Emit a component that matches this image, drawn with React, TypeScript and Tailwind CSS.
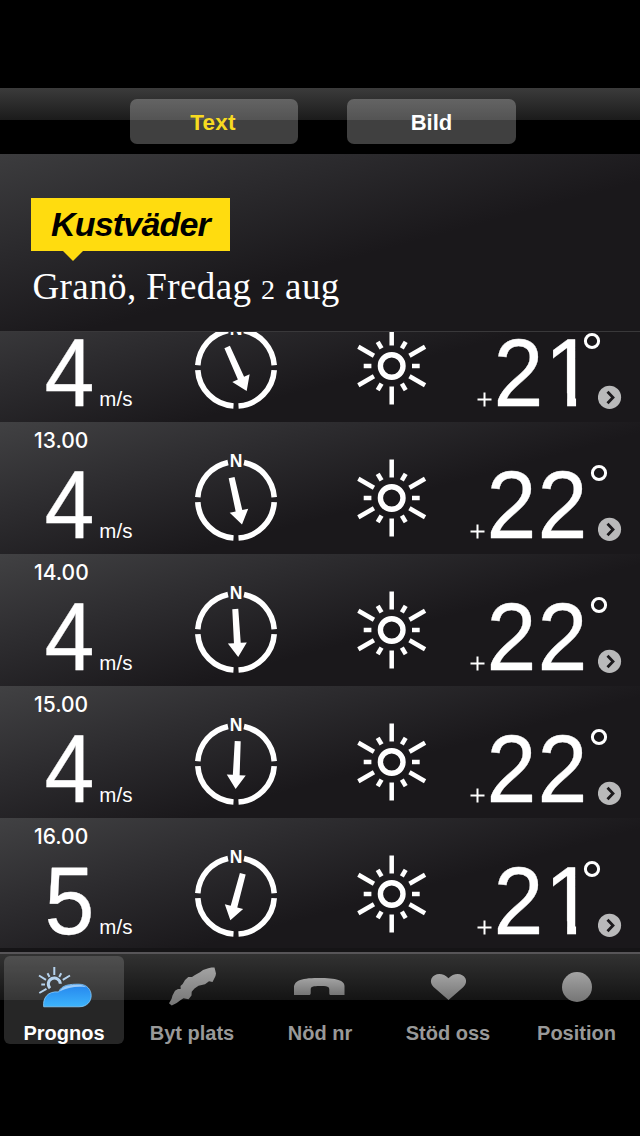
import React from 'react';

type Hour = { time: string; wind: string; angle: number; temp: string };

const hours: Hour[] = [
  { time: '', wind: '4', angle: -24, temp: '21' },
  { time: '13.00', wind: '4', angle: -12.5, temp: '22' },
  { time: '14.00', wind: '4', angle: -3.5, temp: '22' },
  { time: '15.00', wind: '4', angle: 2.5, temp: '22' },
  { time: '16.00', wind: '5', angle: 15, temp: '21' },
];

function Compass({ angle }: { angle: number }) {
  return (
    <svg width="90" height="100" viewBox="-45 -50 90 100" className="block" fill="none">
      <g stroke="#fff" strokeWidth="5.6">
        <path d="M-38.2 -2.8A38.2 38.2 0 0 1 -8 -37.6" />
        <path d="M8 -37.6A38.2 38.2 0 0 1 38.2 -2.8" />
        <path d="M38.2 2.2A38.2 38.2 0 0 1 2.5 38" />
        <path d="M-2.5 38A38.2 38.2 0 0 1 -38.2 2.2" />
      </g>
      <text x="0" y="-32.8" textAnchor="middle" fill="#fff" fontSize="17.5" fontWeight="700" fontFamily="Liberation Sans, Arial, sans-serif">N</text>
      <path transform={`translate(.7 .5) rotate(${angle})`} d="M-3 -23.5H3L3.4 10.5H9.5L0 24.5L-9.5 10.5H-3.4Z" fill="#fff" />
    </svg>
  );
}

function Sun() {
  return (
    <svg width="80" height="80" viewBox="-39.7 -40 80 80" className="block" fill="none" stroke="#fff">
      <circle r="11.3" strokeWidth="5.4" />
      {[0, 60, 120, 180, 240, 300].map((a) => (
        <path key={a} transform={`rotate(${a})`} d="M0 -20.5V-38.5" strokeWidth="4.5" />
      ))}
      {[30, 90, 150, 210, 270, 330].map((a) => (
        <path key={a} transform={`rotate(${a})`} d="M0 -20.3V-28" strokeWidth="4.5" />
      ))}
    </svg>
  );
}

function Digits({ value }: { value: string }) {
  return (
    <span className="flex text-[95.5px] leading-[95px] tracking-[-2px] [-webkit-text-stroke:0.3px_#fff]">
      {value.split('').map((d, i) =>
        d === '1' ? (
          <span key={i} className="block scale-x-94 [clip-path:polygon(0_0,100%_0,100%_70%,65.6%_70%,65.6%_100%,47%_100%,47%_70%,0_70%)]">1</span>
        ) : (
          <span key={i} className="block scale-x-94">{d}</span>
        ),
      )}
    </span>
  );
}

function Row({ h }: { h: Hour }) {
  const wide = h.temp === '22';
  return (
    <div className="flex h-[132px] w-full shrink-0 bg-[linear-gradient(165deg,#414143_0%,#2d2c2f_30%,#1a181b_60%)]">
      <div className="flex w-[191px] flex-col pl-[34px]">
        <span className="mt-[6px] block h-[26px] font-[Inter] text-[21px] leading-[26px] font-medium">{h.time}</span>
        <div className="mt-[4px] flex items-baseline pl-[9px]">
          <Digits value={h.wind} />
          <span className="ml-[5px] text-[20.5px] tracking-[0.2px]">m/s</span>
        </div>
      </div>
      <div className="w-[161px] pt-[28px]"><Compass angle={h.angle} /></div>
      <div className="w-[80px] pt-[36px]"><Sun /></div>
      <div className="flex flex-1 justify-end pt-[36px] pr-[18px]">
        <svg width="15" height="15" className="mt-[66px] -mr-[1px] -ml-[1px] -translate-x-[1px]" stroke="#fff" strokeWidth="2"><path d="M7.5 .5V14.5M.5 7.5H14.5" /></svg>
        <Digits value={h.temp} />
        <div className={wide ? 'flex w-[35px] flex-col' : 'flex w-[28px] flex-col'}>
          <svg width="18" height="18" className={wide ? 'mt-[6px] ml-[3px]' : 'mt-[6px] -ml-[11px]'} fill="none" stroke="#fff" strokeWidth="3"><circle cx="9" cy="9" r="6.6" /></svg>
          <svg width="24" height="24" className={wide ? 'mt-[35px] ml-[11px]' : 'mt-[35px] ml-[4px]'} fill="none"><circle cx="11.5" cy="12.3" r="11.6" fill="#b9b9ba" /><path d="M9.5 6.800L15 12.500L9.500 18.300" stroke="#1b191c" strokeWidth="2.8" /></svg>
        </div>
      </div>
    </div>
  );
}

function Gradient() {
  return (
    <defs>
      <linearGradient id="grey" x1="0" y1="0" x2="0" y2="1"><stop offset="0" stopColor="#a3a3a3" /><stop offset="1" stopColor="#757575" /></linearGradient>
      <linearGradient id="sky" x1="0" y1="0" x2="0" y2="1"><stop offset="0" stopColor="#2585ee" /><stop offset="1" stopColor="#3db4fb" /></linearGradient>
    </defs>
  );
}

const icons = [
  <svg key="w" width="60" height="50" viewBox="34 962 60 50" fill="none">
    <Gradient />
    <g stroke="#b6d3ee" strokeWidth="2">
      <path d="M54.3 967V975M39 975.500L46 979.800M70 975.500L62.800 979.800M39.300 993L46.500 988.800M47.500 973.200L49.500 977M61.200 973.200L59.200 977M41.300 984.500H45" />
      <path d="M50 988.200A6 6 0 1 1 60.300 983.800" strokeWidth="3" />
    </g>
    <path d="M43.700 1006.800C42.500 998 48 990.800 58.500 992C62 984.500 70 984.200 79 984.200C95 984.200 95.500 1006.800 79 1006.800Z" fill="url(#sky)" stroke="#8accfa" strokeWidth=".8" />
    <path d="M59.500 991.500C63 985 70 984.800 79 984.800C82 984.800 84.500 986 86 987.200C77 986 67 987.500 59.500 991.500Z" fill="#9ccbf8" />
  </svg>,
  <svg key="s" width="60" height="50" viewBox="162 962 60 50"><path fill="url(#grey)" d="M214.500 967.500L216 973.500L215.500 976L212.500 982L209 981.300L205 984.300L198.500 985.700L194.500 988.500L191.700 991.700L191.500 995.500L188.500 999.300L183.500 998.300L180 1000.500L176.700 1003L171.700 1005.500L169 1003.300L171.500 999L172.500 995.500L175 990.700L178 989L180.700 989L180.500 986L182.700 984L185 980L188.300 977L192 977L195 975L200 972.300L203 970L208.300 968.300L211.500 967.500Z" /></svg>,
  <svg key="p" width="60" height="50" viewBox="290 962 60 50"><path fill="url(#grey)" d="M294 995V988C294 981.500 299 978 318 978C337 978 344.500 980.500 344.500 986V995H331C329.500 995 329.300 994.500 329.300 993V989.500C329.300 986.500 327 986 320 986C313 986 310.700 986.500 310.700 989.500V993C310.700 994.500 310 995 309 995Z" /></svg>,
  <svg key="h" width="60" height="50" viewBox="418 962 60 50"><path fill="url(#grey)" d="M448.500 1000L435 988.300C431 984.800 430.200 981.500 431.500 978.500C434.500 972.500 443.500 972.500 448.500 978.300C453.500 972.500 462.500 972.500 465.500 978.500C466.800 981.500 466 984.800 462 988.300Z" /></svg>,
  <svg key="c" width="60" height="50" viewBox="546 962 60 50"><circle cx="577" cy="987" r="15" fill="url(#grey)" /></svg>,
];
const labels = ['Prognos', 'Byt plats', 'Nöd nr', 'Stöd oss', 'Position'];

export default function App() {
  return (
    <div className="flex h-[1136px] w-[640px] flex-col overflow-hidden bg-black pt-[88px] font-['Liberation_Sans',Arial,sans-serif] text-white">
      <div className="flex h-[66px] shrink-0 gap-[49px] bg-[linear-gradient(#3b3b3b_0px,#1b1b1b_32px,#000_32px)] pt-[11px] pl-[130px] text-[22px] font-bold">
        <div className="flex h-[45px] w-[168px] items-center justify-center rounded-[7px] bg-white/25 pt-[3px] pr-[2px] text-[22.5px] tracking-[0.2px] text-[#f7da20]">Text</div>
        <div className="flex h-[45px] w-[169px] items-center justify-center rounded-[7px] bg-white/25 pt-[1px]">Bild</div>
      </div>
      <div className="h-[177px] shrink-0 bg-[linear-gradient(165deg,#3c3c3e_0%,#2b2a2d_28%,#1a181b_57%)] pt-[44px] pl-[31px]">
        <div className="flex h-[53px] w-[199px] items-center justify-center bg-[#ffdc0f] text-[34px] tracking-[-0.8px] font-bold text-black italic">Kustväder</div>
        <svg width="20" height="11" className="ml-[32px] block"><path d="M0 0H20L10 10Z" fill="#ffdc0f" /></svg>
        <div className="mt-[5px] pl-[1.5px] font-['Liberation_Serif',serif] text-[37px] leading-[40px] tracking-[0.4px] whitespace-nowrap">Granö, Fredag <span className="text-[28px]">2</span> aug</div>
      </div>
      <div className="flex h-[617px] shrink-0 flex-col overflow-hidden border-t border-[#39383a]">
        <div className="-mt-[42px] shrink-0">{hours.map((h, i) => <Row key={i} h={h} />)}</div>
      </div>
      <div className="h-[4px] shrink-0 bg-[#151416]" />
      <div className="flex h-[48px] shrink-0 justify-start border-t-2 border-[#575558] bg-[linear-gradient(#323232,#141414)]">
        {labels.map((l, i) => (
          <div key={l} className="flex w-[128px] shrink-0 justify-center pt-[2px]">
            <div className={i === 0 ? 'flex h-[88px] w-[120px] flex-col items-center rounded-[6px] bg-white/15 pt-[6px] text-white [&>svg]:shrink-0' : 'flex h-[88px] w-[120px] flex-col items-center pt-[6px] text-[#999] [&>svg]:shrink-0'}>
              {icons[i]}
              <span className={i === 4 ? 'mt-[9px] ml-[1px] text-[20px] leading-[24px] font-bold whitespace-nowrap' : 'mt-[9px] text-[20px] leading-[24px] font-bold whitespace-nowrap'}>{l}</span>
            </div>
          </div>
        ))}
      </div>
    </div>
  );
}
